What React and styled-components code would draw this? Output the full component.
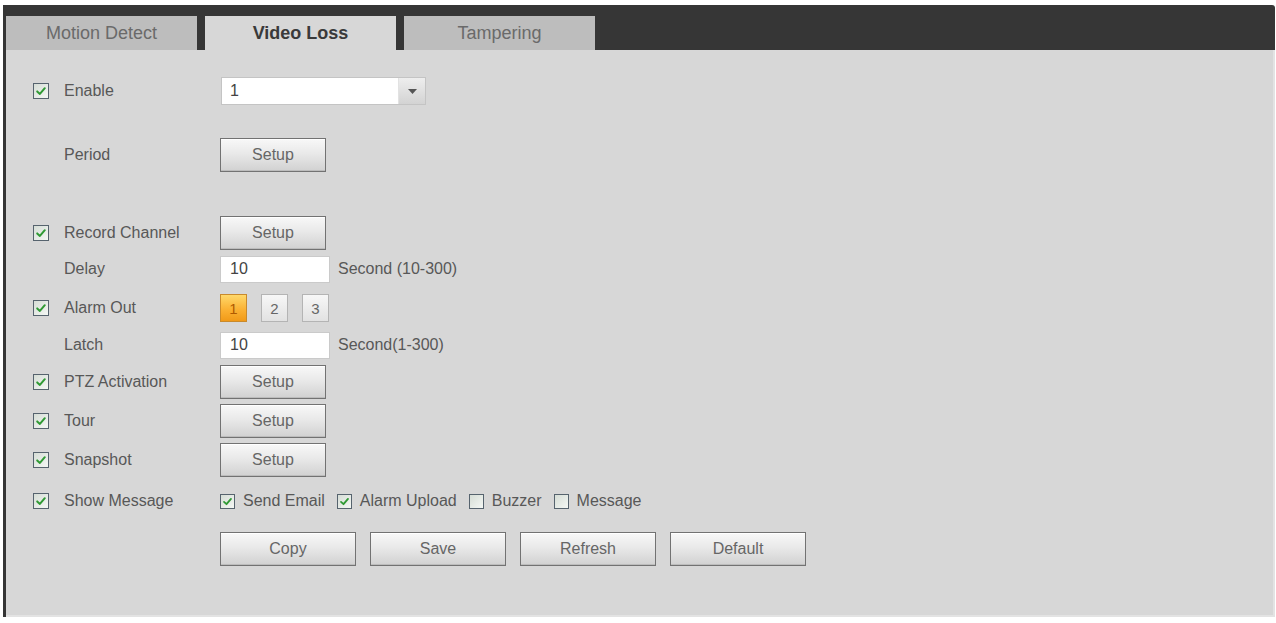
import React from "react";
import styled, { createGlobalStyle } from "styled-components";

const GlobalStyle = createGlobalStyle`
  html, body {
    margin: 0;
    padding: 0;
    background: #ffffff;
  }
  body {
    font-family: "Liberation Sans", Arial, sans-serif;
  }
`;

const Frame = styled.div`
  margin: 5px 0 0 3px;
  width: 1272px;
  border-left: 3px solid #353535;
  box-sizing: border-box;
`;

const TabBar = styled.div`
  height: 45px;
  background: #363636;
  display: flex;
  align-items: flex-end;
  gap: 8px;
  border-top-right-radius: 3px;
`;

const Tab = styled.div`
  width: 191px;
  height: 34px;
  display: flex;
  align-items: center;
  justify-content: center;
  font-size: 18px;
  background: ${(p) => (p.$active ? "#d7d7d7" : "#bdbdbd")};
  color: ${(p) => (p.$active ? "#3a3a3a" : "#6a6a6a")};
  font-weight: ${(p) => (p.$active ? "bold" : "normal")};
`;

const Panel = styled.div`
  height: 567px;
  box-sizing: border-box;
  background: #d7d7d7;
  padding: 23px 0 0 27px;
  border-right: 2px solid #e3e3e3;
  border-bottom: 2px solid #e3e3e3;
`;

const Row = styled.div`
  display: flex;
  align-items: center;
  height: 36px;
  margin-top: ${(p) => p.$mt || 0}px;
`;

const LabelCell = styled.div`
  width: 187px;
  flex-shrink: 0;
  display: flex;
  align-items: center;
  font-size: 16px;
  color: #585858;
`;

const CheckSlot = styled.span`
  width: 31px;
  flex-shrink: 0;
  display: flex;
  align-items: center;
`;

const Box = styled.span`
  width: ${(p) => p.$size}px;
  height: ${(p) => p.$size}px;
  box-sizing: border-box;
  border: 1px solid #56636e;
  background: linear-gradient(135deg, #d6ddd6 0%, #f4f7f4 100%);
  display: inline-flex;
  align-items: center;
  justify-content: center;
  flex-shrink: 0;
`;

const Check = ({ on = true, size = 16 }) => (
  <Box $size={size}>
    {on && (
      <svg width={size - 4} height={size - 4} viewBox="0 0 12 12">
        <path
          d="M2.2 6.4 L4.9 8.9 L9.8 3.2"
          fill="none"
          stroke="#2f9a34"
          strokeWidth="2"
          strokeLinecap="round"
          strokeLinejoin="round"
        />
      </svg>
    )}
  </Box>
);

const Select = styled.div`
  width: 205px;
  height: 28px;
  margin-left: 1px;
  box-sizing: border-box;
  border: 1px solid #c4c4c4;
  background: #ffffff;
  display: flex;
`;

const SelectValue = styled.span`
  flex: 1;
  display: flex;
  align-items: center;
  padding-left: 8px;
  font-size: 16px;
  color: #444;
`;

const SelectArrow = styled.span`
  width: 26px;
  display: flex;
  align-items: center;
  justify-content: center;
  background: linear-gradient(to bottom, #eeeeee, #d3d3d3);
  border-left: 1px solid #e2e2e2;
`;

const Button = styled.button`
  width: ${(p) => p.$w}px;
  height: 34px;
  box-sizing: border-box;
  padding: 0;
  border: 1px solid #727272;
  background: linear-gradient(to bottom, #f8f8f8 0%, #e9e9e9 45%, #d1d1d1 100%);
  box-shadow: inset 0 1px 0 #ffffff, inset 0 -1px 0 #bcbcbc;
  font-family: inherit;
  font-size: 16px;
  color: #666;
  display: flex;
  align-items: center;
  justify-content: center;
`;

const TextInput = styled.input`
  width: 110px;
  height: 27px;
  box-sizing: border-box;
  border: 1px solid #cacaca;
  background: #ffffff;
  padding: 0 0 0 9px;
  font-family: inherit;
  font-size: 16px;
  color: #444;
  outline: none;
`;

const Hint = styled.span`
  margin-left: 8px;
  font-size: 16px;
  color: #585858;
`;

const NumBox = styled.span`
  width: 27px;
  height: 28px;
  box-sizing: border-box;
  margin-right: 14px;
  display: flex;
  align-items: center;
  justify-content: center;
  font-size: 15px;
  border: 1px solid ${(p) => (p.$active ? "#c98a2c" : "#b4b4b4")};
  background: ${(p) =>
    p.$active
      ? "linear-gradient(to bottom, #ffd86a 0%, #fbb234 55%, #f19a18 100%)"
      : "linear-gradient(to bottom, #f7f7f7 0%, #e2e2e2 100%)"};
  color: ${(p) => (p.$active ? "#b05a00" : "#666")};
`;

const Options = styled.div`
  display: flex;
  align-items: center;
  font-size: 16px;
  color: #585858;
`;

const Option = styled.span`
  display: flex;
  align-items: center;
  gap: 8px;
  margin-right: 12px;
`;

const Actions = styled.div`
  display: flex;
  gap: 14px;
`;

const CheckLabel = ({ label, checked }) => (
  <LabelCell>
    <CheckSlot>{checked !== undefined && <Check on={checked} />}</CheckSlot>
    {label}
  </LabelCell>
);

export default function App() {
  return (
    <>
      <GlobalStyle />
      <Frame>
        <TabBar>
          <Tab>Motion Detect</Tab>
          <Tab $active>Video Loss</Tab>
          <Tab>Tampering</Tab>
        </TabBar>
        <Panel>
          <Row>
            <CheckLabel label="Enable" checked />
            <Select>
              <SelectValue>1</SelectValue>
              <SelectArrow>
                <svg width="9" height="5" viewBox="0 0 9 5">
                  <path d="M0 0 H9 L4.5 5 Z" fill="#555" />
                </svg>
              </SelectArrow>
            </Select>
          </Row>
          <Row $mt={28}>
            <CheckLabel label="Period" />
            <Button $w={106}>Setup</Button>
          </Row>
          <Row $mt={42}>
            <CheckLabel label="Record Channel" checked />
            <Button $w={106}>Setup</Button>
          </Row>
          <Row>
            <CheckLabel label="Delay" />
            <TextInput readOnly value="10" />
            <Hint>Second (10-300)</Hint>
          </Row>
          <Row $mt={3}>
            <CheckLabel label="Alarm Out" checked />
            <NumBox $active>1</NumBox>
            <NumBox>2</NumBox>
            <NumBox>3</NumBox>
          </Row>
          <Row $mt={1}>
            <CheckLabel label="Latch" />
            <TextInput readOnly value="10" />
            <Hint>Second(1-300)</Hint>
          </Row>
          <Row $mt={1}>
            <CheckLabel label="PTZ Activation" checked />
            <Button $w={106}>Setup</Button>
          </Row>
          <Row $mt={3}>
            <CheckLabel label="Tour" checked />
            <Button $w={106}>Setup</Button>
          </Row>
          <Row $mt={3}>
            <CheckLabel label="Snapshot" checked />
            <Button $w={106}>Setup</Button>
          </Row>
          <Row $mt={5}>
            <CheckLabel label="Show Message" checked />
            <Options>
              <Option>
                <Check size={15} />
                Send Email
              </Option>
              <Option>
                <Check size={15} />
                Alarm Upload
              </Option>
              <Option>
                <Check size={15} on={false} />
                Buzzer
              </Option>
              <Option>
                <Check size={15} on={false} />
                Message
              </Option>
            </Options>
          </Row>
          <Row $mt={12}>
            <LabelCell />
            <Actions>
              <Button $w={136}>Copy</Button>
              <Button $w={136}>Save</Button>
              <Button $w={136}>Refresh</Button>
              <Button $w={136}>Default</Button>
            </Actions>
          </Row>
        </Panel>
      </Frame>
    </>
  );
}
